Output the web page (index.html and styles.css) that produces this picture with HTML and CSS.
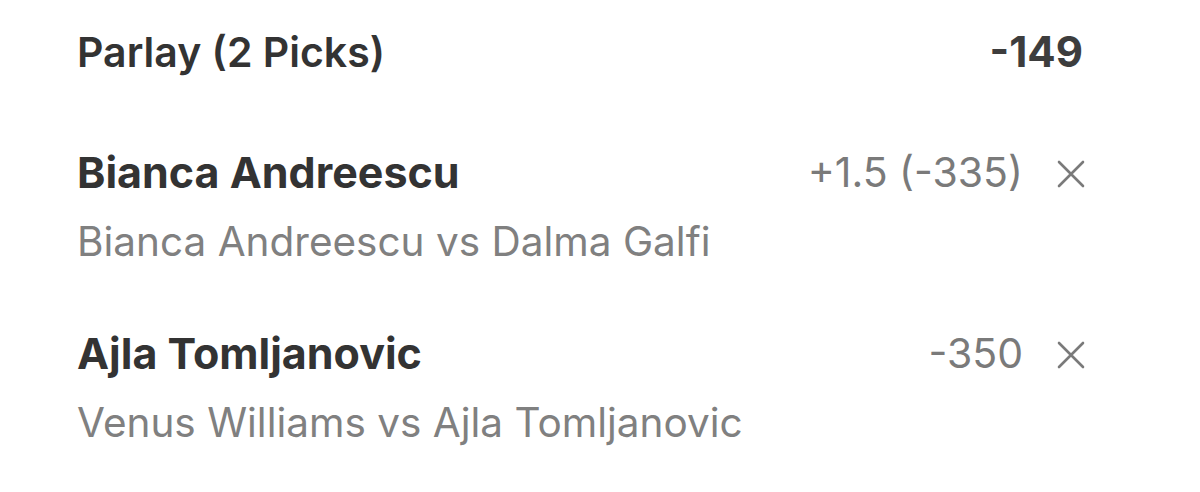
FILE: index.html
```html
<!DOCTYPE html>
<html>
<head>
<meta charset="utf-8">
<link rel="stylesheet" href="styles.css">
</head>
<body>
<div class="slip">
  <div class="header">
    <div class="header-title">Parlay (2 Picks)</div>
    <div class="header-odds">-149</div>
  </div>
  <div class="pick">
    <div class="pick-top">
      <div class="pick-name">Bianca Andreescu</div>
      <div class="pick-right">
        <span class="pick-odds">+1.5 (-335)</span>
        <svg class="close" viewBox="0 0 28 28" width="28" height="28"><path d="M2 2 L26 26 M26 2 L2 26" stroke="#7a7a7a" stroke-width="2.6" stroke-linecap="round" fill="none"/></svg>
      </div>
    </div>
    <div class="pick-match">Bianca Andreescu vs Dalma Galfi</div>
  </div>
  <div class="pick">
    <div class="pick-top">
      <div class="pick-name">Ajla Tomljanovic</div>
      <div class="pick-right">
        <span class="pick-odds">-350</span>
        <svg class="close" viewBox="0 0 28 28" width="28" height="28"><path d="M2 2 L26 26 M26 2 L2 26" stroke="#7a7a7a" stroke-width="2.6" stroke-linecap="round" fill="none"/></svg>
      </div>
    </div>
    <div class="pick-match">Venus Williams vs Ajla Tomljanovic</div>
  </div>
</div>
</body>
</html>
```
FILE: styles.css
```css
html, body {
  margin: 0;
  padding: 0;
  background: #ffffff;
}
body {
  font-family: Inter, "Noto Sans", sans-serif;
  width: 1200px;
  height: 492px;
  overflow: hidden;
}
.slip {
  padding: 27px 115px 0 77px;
  display: flex;
  flex-direction: column;
}
.header {
  display: flex;
  justify-content: space-between;
  align-items: center;
  height: 50px;
  line-height: 50px;
}
.header-title {
  font-size: 41px;
  font-weight: 600;
  color: #333333;
}
.header-odds {
  font-size: 42px;
  font-weight: 700;
  color: #3d3d3d;
  padding-right: 2px;
}
.pick {
  display: flex;
  flex-direction: column;
  margin-top: 70px;
}
.pick + .pick {
  margin-top: 61px;
}
.pick-top {
  display: flex;
  justify-content: space-between;
  align-items: center;
  height: 50px;
  line-height: 50px;
}
.pick-name {
  font-size: 43px;
  font-weight: 700;
  color: #333333;
}
.pick-right {
  display: flex;
  align-items: center;
  gap: 34px;
}
.pick-odds {
  font-size: 41px;
  font-weight: 400;
  color: #7a7a7a;
}
.close {
  display: block;
  margin-top: 4px;
}
.pick-match {
  font-size: 40.5px;
  font-weight: 400;
  color: #808080;
  line-height: 50px;
  margin-top: 20px;
}
```
